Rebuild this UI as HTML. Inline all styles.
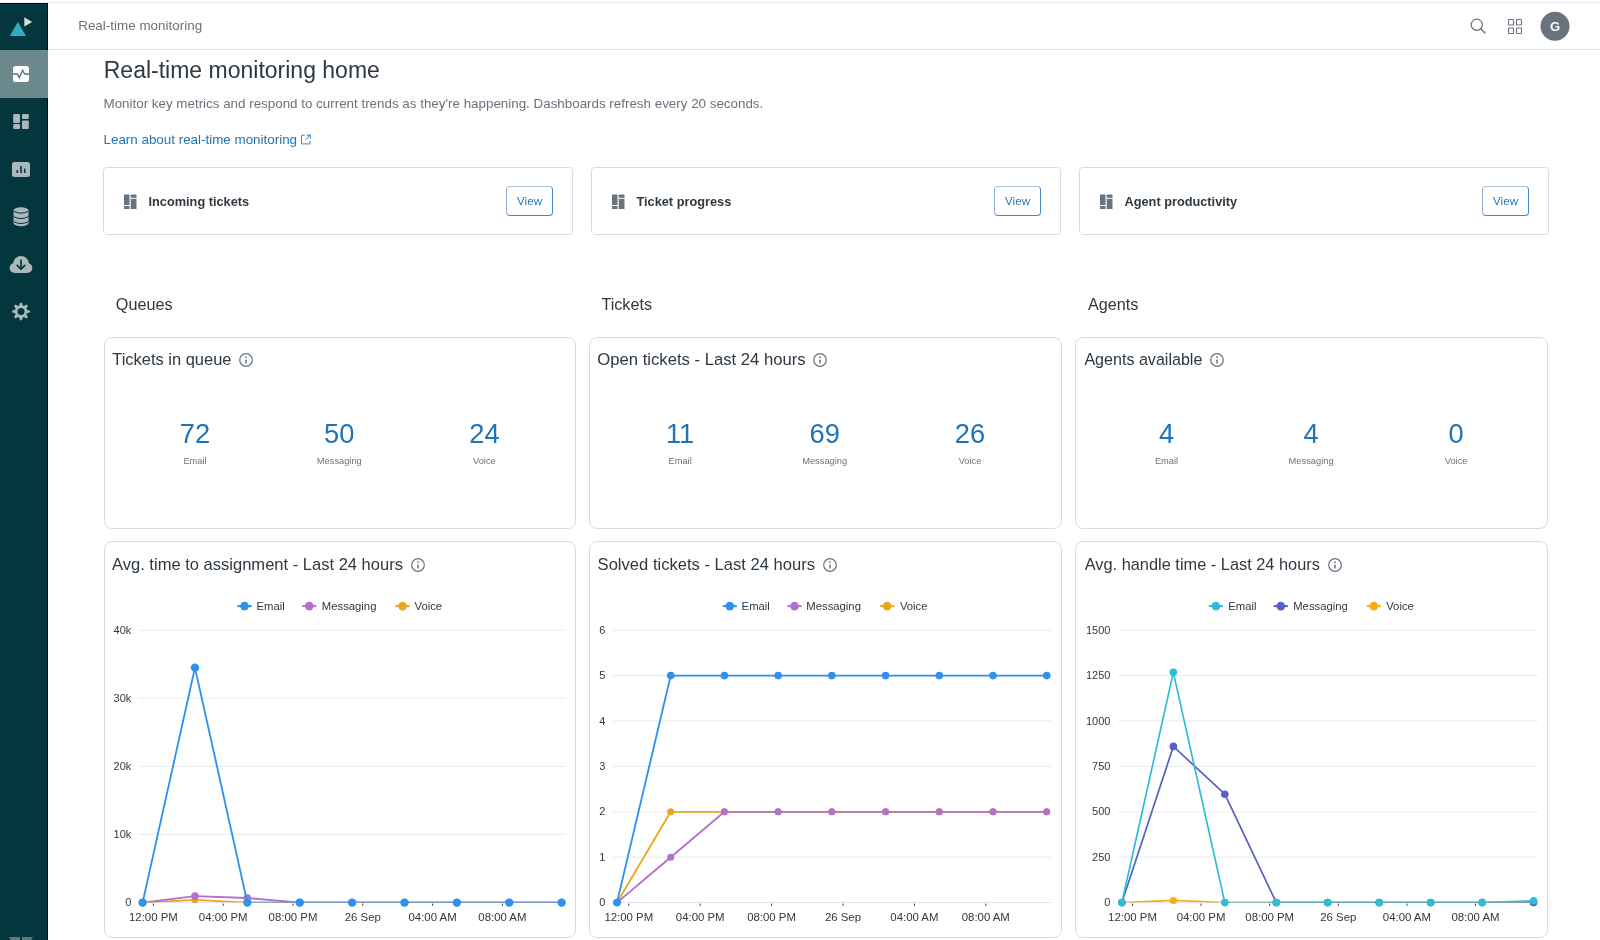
<!DOCTYPE html>
<html><head><meta charset="utf-8"><title>Real-time monitoring</title>
<style>
html,body{margin:0;padding:0;background:#fff;}
body{width:1600px;height:940px;position:relative;overflow:hidden;font-family:"Liberation Sans", sans-serif;}
.t{position:absolute;white-space:nowrap;}
#root{position:absolute;left:0;top:0;width:1600px;height:940px;will-change:transform;}
</style></head><body><div id="root">
<div style="position:absolute;left:0;top:2px;width:1600px;height:1px;background:#e6e9eb"></div>
<div style="position:absolute;left:48px;top:49px;width:1552px;height:1px;background:#dfe3e5"></div>
<div style="position:absolute;left:0;top:3px;width:47px;height:937px;background:#03363d;border-top:1px solid #0a0a22;border-right:1px solid #050520;box-sizing:border-box;width:48px"></div>
<div style="position:absolute;left:0;top:50px;width:48px;height:48px;background:#6c8a8d"></div>

<svg style="position:absolute;left:0;top:0" width="48" height="940" viewBox="0 0 48 940">
  <!-- logo -->
  <polygon points="9.8,36 17.9,21.8 26,36" fill="#30aabc"/>
  <polygon points="24.3,17.3 32.2,21.9 24.3,26.5" fill="#d8dcde"/>
  <!-- activity icon -->
  <rect x="13" y="66" width="16" height="16" rx="2.5" fill="#ffffff"/>
  <polyline points="12.5,74 17.4,74 19.3,77.7 22.6,70.3 24.6,74 29.5,74" fill="none" stroke="#587a7e" stroke-width="1.45" stroke-linejoin="miter"/>
  <!-- dashboard -->
  <g fill="#a9b8ba">
    <rect x="13.2" y="114" width="6.8" height="9" rx="1"/>
    <rect x="13.2" y="124" width="6.8" height="5" rx="1"/>
    <rect x="22" y="114" width="6.8" height="5" rx="1"/>
    <rect x="22" y="120.5" width="6.8" height="8.5" rx="1"/>
  </g>
  <!-- reports -->
  <rect x="12" y="162" width="18" height="15" rx="2.5" fill="#a9b8ba"/>
  <g fill="#03363d">
    <rect x="16.5" y="170" width="1.6" height="3"/>
    <rect x="20.2" y="166" width="1.6" height="7"/>
    <rect x="23.9" y="168.5" width="1.6" height="4.5"/>
  </g>
  <!-- database -->
  <g fill="#a9b8ba">
    <ellipse cx="21" cy="210.5" rx="7.5" ry="3.3"/>
    <rect x="13.5" y="210.5" width="15" height="12.5"/>
    <ellipse cx="21" cy="223" rx="7.5" ry="3.2"/>
  </g>
  <g fill="none" stroke="#03363d" stroke-width="1">
    <path d="M13.5,211.2 Q21,215.2 28.5,211.2"/>
    <path d="M13.5,216.6 Q21,220.6 28.5,216.6"/>
    <path d="M13.5,221.6 Q21,225.6 28.5,221.6"/>
  </g>
  <!-- cloud download -->
  <g fill="#a9b8ba">
    <circle cx="21" cy="263.8" r="7.9"/>
    <circle cx="14.6" cy="268" r="5"/>
    <circle cx="27.3" cy="268" r="5"/>
    <rect x="14.6" y="264" width="12.7" height="9"/>
  </g>
  <g fill="none" stroke="#03363d" stroke-width="1.7" stroke-linecap="round" stroke-linejoin="round">
    <path d="M21,260.3 L21,269"/>
    <path d="M17.2,265.3 L21,269.2 L24.8,265.3"/>
  </g>
  <!-- gear -->
  <g transform="translate(21,311.5)">
    <path fill="#a9b8ba" d="M-1.83,-5.92 L-0.98,-8.85 L0.98,-8.85 L1.83,-5.92 L2.89,-5.48 L5.56,-6.95 L6.95,-5.56 L5.48,-2.89 L5.92,-1.83 L8.85,-0.98 L8.85,0.98 L5.92,1.83 L5.48,2.89 L6.95,5.56 L5.56,6.95 L2.89,5.48 L1.83,5.92 L0.98,8.85 L-0.98,8.85 L-1.83,5.92 L-2.89,5.48 L-5.56,6.95 L-6.95,5.56 L-5.48,2.89 L-5.92,1.83 L-8.85,0.98 L-8.85,-0.98 L-5.92,-1.83 L-5.48,-2.89 L-6.95,-5.56 L-5.56,-6.95 L-2.89,-5.48 Z"/>
    <circle cx="0" cy="0" r="3.5" fill="#03363d"/>
  </g>
  <!-- bottom partial zendesk logo -->
  <polygon points="9,937 20,937 20,940 10.5,940" fill="#5a7a7e"/>
  <polygon points="22,937 33,937 31.3,940 22,940" fill="#5a7a7e"/>
</svg>
<div class="t" style="left:78.20px;top:19.41px;font-size:13.45px;line-height:13.45px;color:#68737d;font-weight:400;">Real-time monitoring</div>
<svg style="position:absolute;left:1460px;top:10px" width="120" height="34" viewBox="1460 10 120 34">
  <circle cx="1476.8" cy="24.8" r="5.6" fill="none" stroke="#68737d" stroke-width="1.2"/>
  <line x1="1480.8" y1="28.8" x2="1485" y2="33" stroke="#68737d" stroke-width="1.3" stroke-linecap="round"/>
  <g fill="none" stroke="#68737d" stroke-width="1.1">
    <rect x="1508.5" y="19.5" width="5" height="5.5" rx="0.6"/>
    <rect x="1516.5" y="19.5" width="5" height="5.5" rx="0.6"/>
    <rect x="1508.5" y="28" width="5" height="5.5" rx="0.6"/>
    <rect x="1516.5" y="28" width="5" height="5.5" rx="0.6"/>
  </g>
  <circle cx="1555" cy="26.3" r="14.5" fill="#68737d"/>
</svg>
<div class="t" style="left:1255.00px;width:600px;text-align:center;top:20.30px;font-size:13px;line-height:13px;color:#ffffff;font-weight:700;">G</div>
<div class="t" style="left:103.75px;top:58.73px;font-size:23px;line-height:23px;color:#2f3941;font-weight:400;">Real-time monitoring home</div>
<div class="t" style="left:103.50px;top:96.87px;font-size:13.38px;line-height:13.38px;color:#68737d;font-weight:400;">Monitor key metrics and respond to current trends as they're happening. Dashboards refresh every 20 seconds.</div>
<div class="t" style="left:103.50px;top:133.36px;font-size:13.4px;line-height:13.4px;color:#1f73b7;font-weight:400;">Learn about real-time monitoring</div>
<svg style="position:absolute;left:300px;top:133px" width="13" height="13" viewBox="300 133 13 13">
  <path d="M304.8,135.3 L301.5,135.3 L301.5,143.9 L310.1,143.9 L310.1,140.8" fill="none" stroke="#3a86c4" stroke-width="0.95"/>
  <path d="M305.6,139.6 L310,135.2 M306.8,135.1 L310.3,135.1 L310.3,138.6" fill="none" stroke="#2a7bbd" stroke-width="1"/>
</svg>
<div style="position:absolute;left:103px;top:167px;width:470px;height:68px;border:1px solid #d8dcde;border-radius:3.5px;box-sizing:border-box"></div>
<svg style="position:absolute;left:123.5px;top:193.5px" width="14" height="16" viewBox="0 0 14 16">
  <g fill="#68737d">
    <rect x="0" y="0.5" width="5.5" height="10.5"/>
    <rect x="0" y="12" width="5.5" height="3"/>
    <rect x="6.7" y="0.5" width="5.8" height="3.3"/>
    <rect x="6.7" y="4.8" width="5.8" height="10.2"/>
  </g></svg>
<div class="t" style="left:148.50px;top:196.11px;font-size:12.75px;line-height:12.75px;color:#2f3941;font-weight:700;">Incoming tickets</div>
<div style="position:absolute;left:506.25px;top:186.25px;width:46.6px;height:29.5px;border:1px solid #4a86c4;border-top-color:#a9c1dc;border-left-color:#8fb0d6;border-radius:4px;box-sizing:border-box"></div>
<div class="t" style="left:229.55px;width:600px;text-align:center;top:194.93px;font-size:11.6px;line-height:11.6px;color:#1f73b7;font-weight:400;">View</div>
<div style="position:absolute;left:591px;top:167px;width:470px;height:68px;border:1px solid #d8dcde;border-radius:3.5px;box-sizing:border-box"></div>
<svg style="position:absolute;left:611.5px;top:193.5px" width="14" height="16" viewBox="0 0 14 16">
  <g fill="#68737d">
    <rect x="0" y="0.5" width="5.5" height="10.5"/>
    <rect x="0" y="12" width="5.5" height="3"/>
    <rect x="6.7" y="0.5" width="5.8" height="3.3"/>
    <rect x="6.7" y="4.8" width="5.8" height="10.2"/>
  </g></svg>
<div class="t" style="left:636.50px;top:196.11px;font-size:12.75px;line-height:12.75px;color:#2f3941;font-weight:700;">Ticket progress</div>
<div style="position:absolute;left:994.25px;top:186.25px;width:46.6px;height:29.5px;border:1px solid #4a86c4;border-top-color:#a9c1dc;border-left-color:#8fb0d6;border-radius:4px;box-sizing:border-box"></div>
<div class="t" style="left:717.55px;width:600px;text-align:center;top:194.93px;font-size:11.6px;line-height:11.6px;color:#1f73b7;font-weight:400;">View</div>
<div style="position:absolute;left:1079px;top:167px;width:470px;height:68px;border:1px solid #d8dcde;border-radius:3.5px;box-sizing:border-box"></div>
<svg style="position:absolute;left:1099.5px;top:193.5px" width="14" height="16" viewBox="0 0 14 16">
  <g fill="#68737d">
    <rect x="0" y="0.5" width="5.5" height="10.5"/>
    <rect x="0" y="12" width="5.5" height="3"/>
    <rect x="6.7" y="0.5" width="5.8" height="3.3"/>
    <rect x="6.7" y="4.8" width="5.8" height="10.2"/>
  </g></svg>
<div class="t" style="left:1124.50px;top:196.11px;font-size:12.75px;line-height:12.75px;color:#2f3941;font-weight:700;">Agent productivity</div>
<div style="position:absolute;left:1482.25px;top:186.25px;width:46.6px;height:29.5px;border:1px solid #4a86c4;border-top-color:#a9c1dc;border-left-color:#8fb0d6;border-radius:4px;box-sizing:border-box"></div>
<div class="t" style="left:1205.55px;width:600px;text-align:center;top:194.93px;font-size:11.6px;line-height:11.6px;color:#1f73b7;font-weight:400;">View</div>
<div class="t" style="left:115.80px;top:296.29px;font-size:16.2px;line-height:16.2px;color:#2f3941;font-weight:400;">Queues</div>
<div style="position:absolute;left:104px;top:336.7px;width:472px;height:192px;border:1px solid #d8dcde;border-radius:8px;box-sizing:border-box"></div>
<div id="mt0" class="t" style="left:112.20px;top:350.75px;font-size:16.48px;line-height:16.48px;color:#2f3941;white-space:nowrap">Tickets in queue</div>
<div class="t" style="left:-105.00px;width:600px;text-align:center;top:420.39px;font-size:27.3px;line-height:27.3px;color:#1f73b7;font-weight:400;">72</div>
<div class="t" style="left:-105.00px;width:600px;text-align:center;top:456.83px;font-size:9.3px;line-height:9.3px;color:#68737d;font-weight:400;">Email</div>
<div class="t" style="left:39.30px;width:600px;text-align:center;top:420.39px;font-size:27.3px;line-height:27.3px;color:#1f73b7;font-weight:400;">50</div>
<div class="t" style="left:39.30px;width:600px;text-align:center;top:456.83px;font-size:9.3px;line-height:9.3px;color:#68737d;font-weight:400;">Messaging</div>
<div class="t" style="left:184.40px;width:600px;text-align:center;top:420.39px;font-size:27.3px;line-height:27.3px;color:#1f73b7;font-weight:400;">24</div>
<div class="t" style="left:184.40px;width:600px;text-align:center;top:456.83px;font-size:9.3px;line-height:9.3px;color:#68737d;font-weight:400;">Voice</div>
<div class="t" style="left:601.40px;top:296.29px;font-size:16.2px;line-height:16.2px;color:#2f3941;font-weight:400;">Tickets</div>
<div style="position:absolute;left:589px;top:336.7px;width:473px;height:192px;border:1px solid #d8dcde;border-radius:8px;box-sizing:border-box"></div>
<div id="mt1" class="t" style="left:597.30px;top:351.79px;font-size:16.67px;line-height:16.67px;color:#2f3941;white-space:nowrap">Open tickets - Last 24 hours</div>
<div class="t" style="left:380.10px;width:600px;text-align:center;top:420.39px;font-size:27.3px;line-height:27.3px;color:#1f73b7;font-weight:400;">11</div>
<div class="t" style="left:380.10px;width:600px;text-align:center;top:456.83px;font-size:9.3px;line-height:9.3px;color:#68737d;font-weight:400;">Email</div>
<div class="t" style="left:524.70px;width:600px;text-align:center;top:420.39px;font-size:27.3px;line-height:27.3px;color:#1f73b7;font-weight:400;">69</div>
<div class="t" style="left:524.70px;width:600px;text-align:center;top:456.83px;font-size:9.3px;line-height:9.3px;color:#68737d;font-weight:400;">Messaging</div>
<div class="t" style="left:670.00px;width:600px;text-align:center;top:420.39px;font-size:27.3px;line-height:27.3px;color:#1f73b7;font-weight:400;">26</div>
<div class="t" style="left:670.00px;width:600px;text-align:center;top:456.83px;font-size:9.3px;line-height:9.3px;color:#68737d;font-weight:400;">Voice</div>
<div class="t" style="left:1087.90px;top:296.29px;font-size:16.2px;line-height:16.2px;color:#2f3941;font-weight:400;">Agents</div>
<div style="position:absolute;left:1075px;top:336.7px;width:473px;height:192px;border:1px solid #d8dcde;border-radius:8px;box-sizing:border-box"></div>
<div id="mt2" class="t" style="left:1084.40px;top:351.09px;font-size:16.08px;line-height:16.08px;color:#2f3941;white-space:nowrap">Agents available</div>
<div class="t" style="left:866.50px;width:600px;text-align:center;top:420.39px;font-size:27.3px;line-height:27.3px;color:#1f73b7;font-weight:400;">4</div>
<div class="t" style="left:866.50px;width:600px;text-align:center;top:456.83px;font-size:9.3px;line-height:9.3px;color:#68737d;font-weight:400;">Email</div>
<div class="t" style="left:1011.10px;width:600px;text-align:center;top:420.39px;font-size:27.3px;line-height:27.3px;color:#1f73b7;font-weight:400;">4</div>
<div class="t" style="left:1011.10px;width:600px;text-align:center;top:456.83px;font-size:9.3px;line-height:9.3px;color:#68737d;font-weight:400;">Messaging</div>
<div class="t" style="left:1156.10px;width:600px;text-align:center;top:420.39px;font-size:27.3px;line-height:27.3px;color:#1f73b7;font-weight:400;">0</div>
<div class="t" style="left:1156.10px;width:600px;text-align:center;top:456.83px;font-size:9.3px;line-height:9.3px;color:#68737d;font-weight:400;">Voice</div>
<svg style="position:absolute;left:237.85px;top:352.20px" width="16" height="16" viewBox="0 0 16 16"><circle cx="8" cy="8" r="6.3" fill="none" stroke="#68737d" stroke-width="1.2"/><rect x="7.25" y="7.6" width="1.5" height="3.8" rx="0.6" fill="#68737d"/><circle cx="8" cy="5.2" r="0.85" fill="#68737d"/></svg>
<svg style="position:absolute;left:812.10px;top:352.00px" width="16" height="16" viewBox="0 0 16 16"><circle cx="8" cy="8" r="6.3" fill="none" stroke="#68737d" stroke-width="1.2"/><rect x="7.25" y="7.6" width="1.5" height="3.8" rx="0.6" fill="#68737d"/><circle cx="8" cy="5.2" r="0.85" fill="#68737d"/></svg>
<svg style="position:absolute;left:1209.00px;top:352.00px" width="16" height="16" viewBox="0 0 16 16"><circle cx="8" cy="8" r="6.3" fill="none" stroke="#68737d" stroke-width="1.2"/><rect x="7.25" y="7.6" width="1.5" height="3.8" rx="0.6" fill="#68737d"/><circle cx="8" cy="5.2" r="0.85" fill="#68737d"/></svg>
<svg style="position:absolute;left:409.70px;top:557.20px" width="16" height="16" viewBox="0 0 16 16"><circle cx="8" cy="8" r="6.3" fill="none" stroke="#68737d" stroke-width="1.2"/><rect x="7.25" y="7.6" width="1.5" height="3.8" rx="0.6" fill="#68737d"/><circle cx="8" cy="5.2" r="0.85" fill="#68737d"/></svg>
<svg style="position:absolute;left:822.10px;top:557.00px" width="16" height="16" viewBox="0 0 16 16"><circle cx="8" cy="8" r="6.3" fill="none" stroke="#68737d" stroke-width="1.2"/><rect x="7.25" y="7.6" width="1.5" height="3.8" rx="0.6" fill="#68737d"/><circle cx="8" cy="5.2" r="0.85" fill="#68737d"/></svg>
<svg style="position:absolute;left:1327.40px;top:557.00px" width="16" height="16" viewBox="0 0 16 16"><circle cx="8" cy="8" r="6.3" fill="none" stroke="#68737d" stroke-width="1.2"/><rect x="7.25" y="7.6" width="1.5" height="3.8" rx="0.6" fill="#68737d"/><circle cx="8" cy="5.2" r="0.85" fill="#68737d"/></svg>
<div style="position:absolute;left:104px;top:541px;width:472px;height:397px;border:1px solid #d8dcde;border-radius:8px;box-sizing:border-box"></div>
<div id="ct0" class="t" style="left:112.00px;top:556.89px;font-size:16.55px;line-height:16.55px;color:#2f3941;white-space:nowrap">Avg. time to assignment - Last 24 hours</div>
<div class="t" style="left:-468.70px;width:600px;text-align:right;top:897.19px;font-size:11px;line-height:11px;color:#2f3941;font-weight:400;">0</div>
<div class="t" style="left:-468.70px;width:600px;text-align:right;top:829.09px;font-size:11px;line-height:11px;color:#2f3941;font-weight:400;">10k</div>
<div class="t" style="left:-468.70px;width:600px;text-align:right;top:760.99px;font-size:11px;line-height:11px;color:#2f3941;font-weight:400;">20k</div>
<div class="t" style="left:-468.70px;width:600px;text-align:right;top:692.89px;font-size:11px;line-height:11px;color:#2f3941;font-weight:400;">30k</div>
<div class="t" style="left:-468.70px;width:600px;text-align:right;top:624.79px;font-size:11px;line-height:11px;color:#2f3941;font-weight:400;">40k</div>
<div class="t" style="left:-146.60px;width:600px;text-align:center;top:911.85px;font-size:11.4px;line-height:11.4px;color:#2f3941;font-weight:400;">12:00 PM</div>
<div class="t" style="left:-76.80px;width:600px;text-align:center;top:911.85px;font-size:11.4px;line-height:11.4px;color:#2f3941;font-weight:400;">04:00 PM</div>
<div class="t" style="left:-7.00px;width:600px;text-align:center;top:911.85px;font-size:11.4px;line-height:11.4px;color:#2f3941;font-weight:400;">08:00 PM</div>
<div class="t" style="left:62.80px;width:600px;text-align:center;top:911.85px;font-size:11.4px;line-height:11.4px;color:#2f3941;font-weight:400;">26 Sep</div>
<div class="t" style="left:132.60px;width:600px;text-align:center;top:911.85px;font-size:11.4px;line-height:11.4px;color:#2f3941;font-weight:400;">04:00 AM</div>
<div class="t" style="left:202.40px;width:600px;text-align:center;top:911.85px;font-size:11.4px;line-height:11.4px;color:#2f3941;font-weight:400;">08:00 AM</div>
<div style="position:absolute;left:589px;top:541px;width:473px;height:397px;border:1px solid #d8dcde;border-radius:8px;box-sizing:border-box"></div>
<div id="ct1" class="t" style="left:597.60px;top:556.87px;font-size:16.58px;line-height:16.58px;color:#2f3941;white-space:nowrap">Solved tickets - Last 24 hours</div>
<div class="t" style="left:5.40px;width:600px;text-align:right;top:897.19px;font-size:11px;line-height:11px;color:#2f3941;font-weight:400;">0</div>
<div class="t" style="left:5.40px;width:600px;text-align:right;top:851.79px;font-size:11px;line-height:11px;color:#2f3941;font-weight:400;">1</div>
<div class="t" style="left:5.40px;width:600px;text-align:right;top:806.39px;font-size:11px;line-height:11px;color:#2f3941;font-weight:400;">2</div>
<div class="t" style="left:5.40px;width:600px;text-align:right;top:760.99px;font-size:11px;line-height:11px;color:#2f3941;font-weight:400;">3</div>
<div class="t" style="left:5.40px;width:600px;text-align:right;top:715.59px;font-size:11px;line-height:11px;color:#2f3941;font-weight:400;">4</div>
<div class="t" style="left:5.40px;width:600px;text-align:right;top:670.19px;font-size:11px;line-height:11px;color:#2f3941;font-weight:400;">5</div>
<div class="t" style="left:5.40px;width:600px;text-align:right;top:624.79px;font-size:11px;line-height:11px;color:#2f3941;font-weight:400;">6</div>
<div class="t" style="left:328.80px;width:600px;text-align:center;top:911.85px;font-size:11.4px;line-height:11.4px;color:#2f3941;font-weight:400;">12:00 PM</div>
<div class="t" style="left:400.20px;width:600px;text-align:center;top:911.85px;font-size:11.4px;line-height:11.4px;color:#2f3941;font-weight:400;">04:00 PM</div>
<div class="t" style="left:471.60px;width:600px;text-align:center;top:911.85px;font-size:11.4px;line-height:11.4px;color:#2f3941;font-weight:400;">08:00 PM</div>
<div class="t" style="left:543.00px;width:600px;text-align:center;top:911.85px;font-size:11.4px;line-height:11.4px;color:#2f3941;font-weight:400;">26 Sep</div>
<div class="t" style="left:614.40px;width:600px;text-align:center;top:911.85px;font-size:11.4px;line-height:11.4px;color:#2f3941;font-weight:400;">04:00 AM</div>
<div class="t" style="left:685.80px;width:600px;text-align:center;top:911.85px;font-size:11.4px;line-height:11.4px;color:#2f3941;font-weight:400;">08:00 AM</div>
<div style="position:absolute;left:1075px;top:541px;width:473px;height:397px;border:1px solid #d8dcde;border-radius:8px;box-sizing:border-box"></div>
<div id="ct2" class="t" style="left:1084.70px;top:555.94px;font-size:16.37px;line-height:16.37px;color:#2f3941;white-space:nowrap">Avg. handle time - Last 24 hours</div>
<div class="t" style="left:510.40px;width:600px;text-align:right;top:897.19px;font-size:11px;line-height:11px;color:#2f3941;font-weight:400;">0</div>
<div class="t" style="left:510.40px;width:600px;text-align:right;top:851.79px;font-size:11px;line-height:11px;color:#2f3941;font-weight:400;">250</div>
<div class="t" style="left:510.40px;width:600px;text-align:right;top:806.39px;font-size:11px;line-height:11px;color:#2f3941;font-weight:400;">500</div>
<div class="t" style="left:510.40px;width:600px;text-align:right;top:760.99px;font-size:11px;line-height:11px;color:#2f3941;font-weight:400;">750</div>
<div class="t" style="left:510.40px;width:600px;text-align:right;top:715.59px;font-size:11px;line-height:11px;color:#2f3941;font-weight:400;">1000</div>
<div class="t" style="left:510.40px;width:600px;text-align:right;top:670.19px;font-size:11px;line-height:11px;color:#2f3941;font-weight:400;">1250</div>
<div class="t" style="left:510.40px;width:600px;text-align:right;top:624.79px;font-size:11px;line-height:11px;color:#2f3941;font-weight:400;">1500</div>
<div class="t" style="left:832.50px;width:600px;text-align:center;top:911.85px;font-size:11.4px;line-height:11.4px;color:#2f3941;font-weight:400;">12:00 PM</div>
<div class="t" style="left:901.10px;width:600px;text-align:center;top:911.85px;font-size:11.4px;line-height:11.4px;color:#2f3941;font-weight:400;">04:00 PM</div>
<div class="t" style="left:969.70px;width:600px;text-align:center;top:911.85px;font-size:11.4px;line-height:11.4px;color:#2f3941;font-weight:400;">08:00 PM</div>
<div class="t" style="left:1038.30px;width:600px;text-align:center;top:911.85px;font-size:11.4px;line-height:11.4px;color:#2f3941;font-weight:400;">26 Sep</div>
<div class="t" style="left:1106.90px;width:600px;text-align:center;top:911.85px;font-size:11.4px;line-height:11.4px;color:#2f3941;font-weight:400;">04:00 AM</div>
<div class="t" style="left:1175.50px;width:600px;text-align:center;top:911.85px;font-size:11.4px;line-height:11.4px;color:#2f3941;font-weight:400;">08:00 AM</div>
<svg style="position:absolute;left:0;top:0" width="1600" height="940" viewBox="0 0 1600 940"><defs><clipPath id="plotclip"><rect x="0" y="0" width="1600" height="902.6"/></clipPath></defs>
<line x1="139.1" y1="902.60" x2="565.7" y2="902.60" stroke="#dbe5f0" stroke-width="1"/>
<line x1="139.1" y1="834.50" x2="565.7" y2="834.50" stroke="#e9ebed" stroke-width="1"/>
<line x1="139.1" y1="766.40" x2="565.7" y2="766.40" stroke="#e9ebed" stroke-width="1"/>
<line x1="139.1" y1="698.30" x2="565.7" y2="698.30" stroke="#e9ebed" stroke-width="1"/>
<line x1="139.1" y1="630.20" x2="565.7" y2="630.20" stroke="#e9ebed" stroke-width="1"/>
<line x1="153.40" y1="903.60" x2="153.40" y2="905.80" stroke="#2f3941" stroke-width="1"/>
<line x1="223.20" y1="903.60" x2="223.20" y2="905.80" stroke="#2f3941" stroke-width="1"/>
<line x1="293.00" y1="903.60" x2="293.00" y2="905.80" stroke="#2f3941" stroke-width="1"/>
<line x1="362.80" y1="903.60" x2="362.80" y2="905.80" stroke="#2f3941" stroke-width="1"/>
<line x1="432.60" y1="903.60" x2="432.60" y2="905.80" stroke="#2f3941" stroke-width="1"/>
<line x1="502.40" y1="903.60" x2="502.40" y2="905.80" stroke="#2f3941" stroke-width="1"/>
<polyline clip-path="url(#plotclip)" points="142.60,902.60 194.97,899.88 247.35,902.60 299.73,902.60 352.10,902.60 404.48,902.60 456.85,902.60 509.23,902.60 561.60,902.60" fill="none" stroke="#eda51b" stroke-width="1.85" stroke-linejoin="round"/>
<circle cx="142.60" cy="902.60" r="3.3" fill="#eda51b"/>
<circle cx="194.97" cy="899.88" r="3.3" fill="#eda51b"/>
<circle cx="247.35" cy="902.60" r="3.3" fill="#eda51b"/>
<circle cx="299.73" cy="902.60" r="3.3" fill="#eda51b"/>
<circle cx="352.10" cy="902.60" r="3.3" fill="#eda51b"/>
<circle cx="404.48" cy="902.60" r="3.3" fill="#eda51b"/>
<circle cx="456.85" cy="902.60" r="3.3" fill="#eda51b"/>
<circle cx="509.23" cy="902.60" r="3.3" fill="#eda51b"/>
<circle cx="561.60" cy="902.60" r="3.3" fill="#eda51b"/>
<polyline clip-path="url(#plotclip)" points="142.60,902.60 194.97,896.13 247.35,897.97 299.73,902.60 352.10,902.60 404.48,902.60 456.85,902.60 509.23,902.60 561.60,902.60" fill="none" stroke="#b072cc" stroke-width="1.85" stroke-linejoin="round"/>
<circle cx="142.60" cy="902.60" r="3.8" fill="#b072cc"/>
<circle cx="194.97" cy="896.13" r="3.8" fill="#b072cc"/>
<circle cx="247.35" cy="897.97" r="3.8" fill="#b072cc"/>
<circle cx="299.73" cy="902.60" r="3.8" fill="#b072cc"/>
<circle cx="352.10" cy="902.60" r="3.8" fill="#b072cc"/>
<circle cx="404.48" cy="902.60" r="3.8" fill="#b072cc"/>
<circle cx="456.85" cy="902.60" r="3.8" fill="#b072cc"/>
<circle cx="509.23" cy="902.60" r="3.8" fill="#b072cc"/>
<circle cx="561.60" cy="902.60" r="3.8" fill="#b072cc"/>
<polyline clip-path="url(#plotclip)" points="142.60,902.60 194.97,667.65 247.35,902.60 299.73,902.60 352.10,902.60 404.48,902.60 456.85,902.60 509.23,902.60 561.60,902.60" fill="none" stroke="#3091ec" stroke-width="1.85" stroke-linejoin="round"/>
<circle cx="142.60" cy="902.60" r="4.2" fill="#3091ec"/>
<circle cx="194.97" cy="667.65" r="4.2" fill="#3091ec"/>
<circle cx="247.35" cy="902.60" r="4.2" fill="#3091ec"/>
<circle cx="299.73" cy="902.60" r="4.2" fill="#3091ec"/>
<circle cx="352.10" cy="902.60" r="4.2" fill="#3091ec"/>
<circle cx="404.48" cy="902.60" r="4.2" fill="#3091ec"/>
<circle cx="456.85" cy="902.60" r="4.2" fill="#3091ec"/>
<circle cx="509.23" cy="902.60" r="4.2" fill="#3091ec"/>
<circle cx="561.60" cy="902.60" r="4.2" fill="#3091ec"/>
<line x1="612.7" y1="902.60" x2="1051.8" y2="902.60" stroke="#dbe5f0" stroke-width="1"/>
<line x1="612.7" y1="857.20" x2="1051.8" y2="857.20" stroke="#e9ebed" stroke-width="1"/>
<line x1="612.7" y1="811.80" x2="1051.8" y2="811.80" stroke="#e9ebed" stroke-width="1"/>
<line x1="612.7" y1="766.40" x2="1051.8" y2="766.40" stroke="#e9ebed" stroke-width="1"/>
<line x1="612.7" y1="721.00" x2="1051.8" y2="721.00" stroke="#e9ebed" stroke-width="1"/>
<line x1="612.7" y1="675.60" x2="1051.8" y2="675.60" stroke="#e9ebed" stroke-width="1"/>
<line x1="612.7" y1="630.20" x2="1051.8" y2="630.20" stroke="#e9ebed" stroke-width="1"/>
<line x1="628.80" y1="903.60" x2="628.80" y2="905.80" stroke="#2f3941" stroke-width="1"/>
<line x1="700.20" y1="903.60" x2="700.20" y2="905.80" stroke="#2f3941" stroke-width="1"/>
<line x1="771.60" y1="903.60" x2="771.60" y2="905.80" stroke="#2f3941" stroke-width="1"/>
<line x1="843.00" y1="903.60" x2="843.00" y2="905.80" stroke="#2f3941" stroke-width="1"/>
<line x1="914.40" y1="903.60" x2="914.40" y2="905.80" stroke="#2f3941" stroke-width="1"/>
<line x1="985.80" y1="903.60" x2="985.80" y2="905.80" stroke="#2f3941" stroke-width="1"/>
<polyline clip-path="url(#plotclip)" points="617.00,902.60 670.71,811.80 724.42,811.80 778.14,811.80 831.85,811.80 885.56,811.80 939.28,811.80 992.99,811.80 1046.70,811.80" fill="none" stroke="#eda51b" stroke-width="1.85" stroke-linejoin="round"/>
<circle cx="617.00" cy="902.60" r="3.5" fill="#eda51b"/>
<circle cx="670.71" cy="811.80" r="3.5" fill="#eda51b"/>
<circle cx="724.42" cy="811.80" r="3.5" fill="#eda51b"/>
<circle cx="778.14" cy="811.80" r="3.5" fill="#eda51b"/>
<circle cx="831.85" cy="811.80" r="3.5" fill="#eda51b"/>
<circle cx="885.56" cy="811.80" r="3.5" fill="#eda51b"/>
<circle cx="939.28" cy="811.80" r="3.5" fill="#eda51b"/>
<circle cx="992.99" cy="811.80" r="3.5" fill="#eda51b"/>
<circle cx="1046.70" cy="811.80" r="3.5" fill="#eda51b"/>
<polyline clip-path="url(#plotclip)" points="617.00,902.60 670.71,857.20 724.42,811.80 778.14,811.80 831.85,811.80 885.56,811.80 939.28,811.80 992.99,811.80 1046.70,811.80" fill="none" stroke="#b072cc" stroke-width="1.85" stroke-linejoin="round"/>
<circle cx="617.00" cy="902.60" r="3.5" fill="#b072cc"/>
<circle cx="670.71" cy="857.20" r="3.5" fill="#b072cc"/>
<circle cx="724.42" cy="811.80" r="3.5" fill="#b072cc"/>
<circle cx="778.14" cy="811.80" r="3.5" fill="#b072cc"/>
<circle cx="831.85" cy="811.80" r="3.5" fill="#b072cc"/>
<circle cx="885.56" cy="811.80" r="3.5" fill="#b072cc"/>
<circle cx="939.28" cy="811.80" r="3.5" fill="#b072cc"/>
<circle cx="992.99" cy="811.80" r="3.5" fill="#b072cc"/>
<circle cx="1046.70" cy="811.80" r="3.5" fill="#b072cc"/>
<polyline clip-path="url(#plotclip)" points="617.00,902.60 670.71,675.60 724.42,675.60 778.14,675.60 831.85,675.60 885.56,675.60 939.28,675.60 992.99,675.60 1046.70,675.60" fill="none" stroke="#3091ec" stroke-width="1.85" stroke-linejoin="round"/>
<circle cx="617.00" cy="902.60" r="3.8" fill="#3091ec"/>
<circle cx="670.71" cy="675.60" r="3.8" fill="#3091ec"/>
<circle cx="724.42" cy="675.60" r="3.8" fill="#3091ec"/>
<circle cx="778.14" cy="675.60" r="3.8" fill="#3091ec"/>
<circle cx="831.85" cy="675.60" r="3.8" fill="#3091ec"/>
<circle cx="885.56" cy="675.60" r="3.8" fill="#3091ec"/>
<circle cx="939.28" cy="675.60" r="3.8" fill="#3091ec"/>
<circle cx="992.99" cy="675.60" r="3.8" fill="#3091ec"/>
<circle cx="1046.70" cy="675.60" r="3.8" fill="#3091ec"/>
<line x1="1118.0" y1="902.60" x2="1537.9" y2="902.60" stroke="#dbe5f0" stroke-width="1"/>
<line x1="1118.0" y1="857.20" x2="1537.9" y2="857.20" stroke="#e9ebed" stroke-width="1"/>
<line x1="1118.0" y1="811.80" x2="1537.9" y2="811.80" stroke="#e9ebed" stroke-width="1"/>
<line x1="1118.0" y1="766.40" x2="1537.9" y2="766.40" stroke="#e9ebed" stroke-width="1"/>
<line x1="1118.0" y1="721.00" x2="1537.9" y2="721.00" stroke="#e9ebed" stroke-width="1"/>
<line x1="1118.0" y1="675.60" x2="1537.9" y2="675.60" stroke="#e9ebed" stroke-width="1"/>
<line x1="1118.0" y1="630.20" x2="1537.9" y2="630.20" stroke="#e9ebed" stroke-width="1"/>
<line x1="1132.50" y1="903.60" x2="1132.50" y2="905.80" stroke="#2f3941" stroke-width="1"/>
<line x1="1201.10" y1="903.60" x2="1201.10" y2="905.80" stroke="#2f3941" stroke-width="1"/>
<line x1="1269.70" y1="903.60" x2="1269.70" y2="905.80" stroke="#2f3941" stroke-width="1"/>
<line x1="1338.30" y1="903.60" x2="1338.30" y2="905.80" stroke="#2f3941" stroke-width="1"/>
<line x1="1406.90" y1="903.60" x2="1406.90" y2="905.80" stroke="#2f3941" stroke-width="1"/>
<line x1="1475.50" y1="903.60" x2="1475.50" y2="905.80" stroke="#2f3941" stroke-width="1"/>
<polyline clip-path="url(#plotclip)" points="1121.90,902.60 1173.36,900.42 1224.83,902.60 1276.29,902.60 1327.75,902.60 1379.21,902.60 1430.67,902.60 1482.14,902.60 1533.60,902.60" fill="none" stroke="#f9ac16" stroke-width="1.7" stroke-linejoin="round"/>
<circle cx="1121.90" cy="902.60" r="3.5" fill="#f9ac16"/>
<circle cx="1173.36" cy="900.42" r="3.5" fill="#f9ac16"/>
<circle cx="1224.83" cy="902.60" r="3.5" fill="#f9ac16"/>
<circle cx="1276.29" cy="902.60" r="3.5" fill="#f9ac16"/>
<circle cx="1327.75" cy="902.60" r="3.5" fill="#f9ac16"/>
<circle cx="1379.21" cy="902.60" r="3.5" fill="#f9ac16"/>
<circle cx="1430.67" cy="902.60" r="3.5" fill="#f9ac16"/>
<circle cx="1482.14" cy="902.60" r="3.5" fill="#f9ac16"/>
<circle cx="1533.60" cy="902.60" r="3.5" fill="#f9ac16"/>
<polyline clip-path="url(#plotclip)" points="1121.90,902.60 1173.36,746.42 1224.83,794.18 1276.29,902.60 1327.75,902.60 1379.21,902.60 1430.67,902.60 1482.14,902.60 1533.60,902.60" fill="none" stroke="#5661c6" stroke-width="1.7" stroke-linejoin="round"/>
<circle cx="1121.90" cy="902.60" r="3.8" fill="#5661c6"/>
<circle cx="1173.36" cy="746.42" r="3.8" fill="#5661c6"/>
<circle cx="1224.83" cy="794.18" r="3.8" fill="#5661c6"/>
<circle cx="1276.29" cy="902.60" r="3.8" fill="#5661c6"/>
<circle cx="1327.75" cy="902.60" r="3.8" fill="#5661c6"/>
<circle cx="1379.21" cy="902.60" r="3.8" fill="#5661c6"/>
<circle cx="1430.67" cy="902.60" r="3.8" fill="#5661c6"/>
<circle cx="1482.14" cy="902.60" r="3.8" fill="#5661c6"/>
<circle cx="1533.60" cy="902.60" r="3.8" fill="#5661c6"/>
<polyline clip-path="url(#plotclip)" points="1121.90,902.60 1173.36,672.33 1224.83,902.60 1276.29,902.60 1327.75,902.60 1379.21,902.60 1430.67,902.60 1482.14,902.60 1533.60,900.78" fill="none" stroke="#2fbdd6" stroke-width="1.7" stroke-linejoin="round"/>
<circle cx="1121.90" cy="902.60" r="3.8" fill="#2fbdd6"/>
<circle cx="1173.36" cy="672.33" r="3.8" fill="#2fbdd6"/>
<circle cx="1224.83" cy="902.60" r="3.8" fill="#2fbdd6"/>
<circle cx="1276.29" cy="902.60" r="3.8" fill="#2fbdd6"/>
<circle cx="1327.75" cy="902.60" r="3.8" fill="#2fbdd6"/>
<circle cx="1379.21" cy="902.60" r="3.8" fill="#2fbdd6"/>
<circle cx="1430.67" cy="902.60" r="3.8" fill="#2fbdd6"/>
<circle cx="1482.14" cy="902.60" r="3.8" fill="#2fbdd6"/>
<circle cx="1533.60" cy="900.78" r="3.8" fill="#2fbdd6"/>
</svg>
<div class="t" style="left:256.50px;top:600.83px;font-size:11.3px;line-height:11.3px;color:#2f3941;font-weight:400;">Email</div>
<div class="t" style="left:321.80px;top:600.83px;font-size:11.3px;line-height:11.3px;color:#2f3941;font-weight:400;">Messaging</div>
<div class="t" style="left:414.50px;top:600.83px;font-size:11.3px;line-height:11.3px;color:#2f3941;font-weight:400;">Voice</div>
<div class="t" style="left:741.60px;top:600.83px;font-size:11.3px;line-height:11.3px;color:#2f3941;font-weight:400;">Email</div>
<div class="t" style="left:806.30px;top:600.83px;font-size:11.3px;line-height:11.3px;color:#2f3941;font-weight:400;">Messaging</div>
<div class="t" style="left:899.90px;top:600.83px;font-size:11.3px;line-height:11.3px;color:#2f3941;font-weight:400;">Voice</div>
<div class="t" style="left:1228.30px;top:600.83px;font-size:11.3px;line-height:11.3px;color:#2f3941;font-weight:400;">Email</div>
<div class="t" style="left:1293.20px;top:600.83px;font-size:11.3px;line-height:11.3px;color:#2f3941;font-weight:400;">Messaging</div>
<div class="t" style="left:1386.20px;top:600.83px;font-size:11.3px;line-height:11.3px;color:#2f3941;font-weight:400;">Voice</div>
<svg style="position:absolute;left:0;top:0" width="1600" height="940" viewBox="0 0 1600 940"><defs><clipPath id="plotclip"><rect x="0" y="0" width="1600" height="902.6"/></clipPath></defs>
<line x1="237.40" y1="606.1" x2="251.60" y2="606.1" stroke="#3091ec" stroke-width="2"/>
<circle cx="244.50" cy="606.1" r="4.3" fill="#3091ec"/>
<line x1="302.20" y1="606.1" x2="316.40" y2="606.1" stroke="#b072cc" stroke-width="2"/>
<circle cx="309.30" cy="606.1" r="4.3" fill="#b072cc"/>
<line x1="395.40" y1="606.1" x2="409.60" y2="606.1" stroke="#eda51b" stroke-width="2"/>
<circle cx="402.50" cy="606.1" r="4.3" fill="#eda51b"/>
<line x1="722.70" y1="606.1" x2="736.90" y2="606.1" stroke="#3091ec" stroke-width="2"/>
<circle cx="729.80" cy="606.1" r="4.3" fill="#3091ec"/>
<line x1="787.40" y1="606.1" x2="801.60" y2="606.1" stroke="#b072cc" stroke-width="2"/>
<circle cx="794.50" cy="606.1" r="4.3" fill="#b072cc"/>
<line x1="880.10" y1="606.1" x2="894.30" y2="606.1" stroke="#eda51b" stroke-width="2"/>
<circle cx="887.20" cy="606.1" r="4.3" fill="#eda51b"/>
<line x1="1208.80" y1="606.1" x2="1223.00" y2="606.1" stroke="#2fbdd6" stroke-width="2"/>
<circle cx="1215.90" cy="606.1" r="4.3" fill="#2fbdd6"/>
<line x1="1273.70" y1="606.1" x2="1287.90" y2="606.1" stroke="#5661c6" stroke-width="2"/>
<circle cx="1280.80" cy="606.1" r="4.3" fill="#5661c6"/>
<line x1="1366.70" y1="606.1" x2="1380.90" y2="606.1" stroke="#f9ac16" stroke-width="2"/>
<circle cx="1373.80" cy="606.1" r="4.3" fill="#f9ac16"/>
</svg>
</div></body></html>
